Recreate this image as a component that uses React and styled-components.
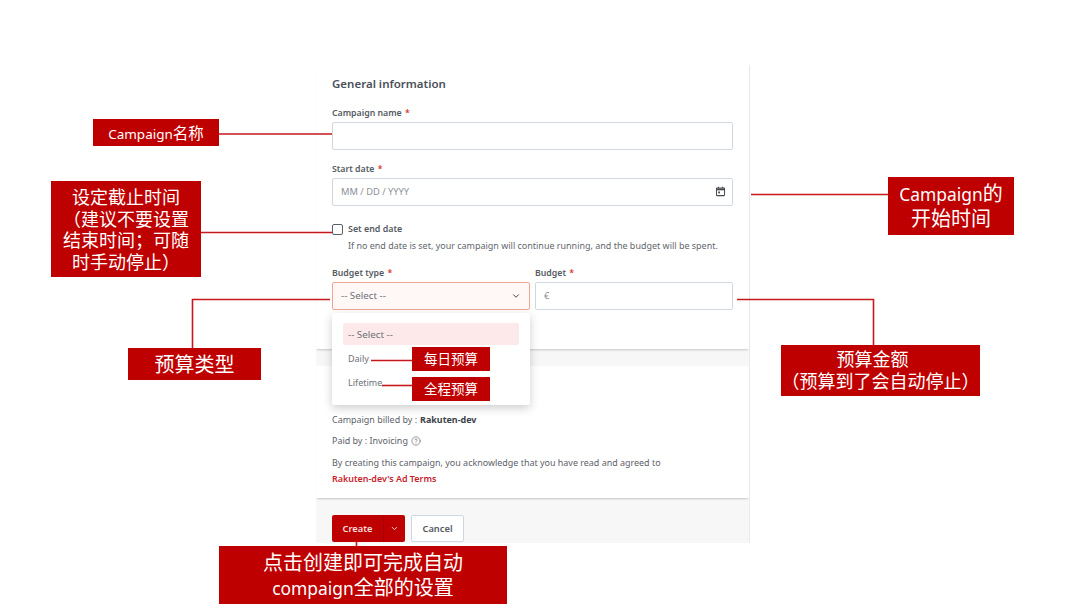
import React from "react";
import styled, { createGlobalStyle } from "styled-components";
import { ChevronDown, CircleHelp } from "lucide-react";

const Global = createGlobalStyle`
  html, body { margin: 0; padding: 0; background: #fff; }
  body { width: 1080px; height: 608px; overflow: hidden; font-family: "Noto Sans", "Liberation Sans", sans-serif; }
`;
const Page = styled.div`
  position: relative;
  width: 1080px;
  height: 608px;
  padding: 65px 0 0 316px;
  box-sizing: border-box;
  background: #fff;
`;
const Panel = styled.main`
  width: 433px;
  background: #f7f7f7;
  border-right: 1px solid #e9eaec;
  box-sizing: content-box;
`;
const Card = styled.section`
  position: relative;
  background: #fff;
  box-shadow: 0 2px 2px -1px rgba(0, 0, 0, 0.2);
  padding: ${(p) => p.$pad};
  height: ${(p) => p.$h}px;
  box-sizing: border-box;
  margin-bottom: ${(p) => p.$mb || 0}px;
`;
const Heading = styled.h2`
  margin: 0 0 14px;
  font-size: 11.5px;
  line-height: 16px;
  font-weight: 600;
  color: #4a5058;
`;
const Field = styled.div`
  display: flex;
  flex-direction: column;
  flex: ${(p) => p.$flex || "none"};
  margin-bottom: ${(p) => p.$mb || 0}px;
`;
const Label = styled.label`
  font-size: 8.75px;
  line-height: 13px;
  font-weight: 600;
  color: #555b63;
  margin: 1px 0 2px;
  i { font-style: normal; color: #d8392f; margin-left: 1px; }
`;
const Input = styled.div`
  height: 28px;
  box-sizing: border-box;
  border: 1px solid ${(p) => (p.$active ? "#f0a597" : "#cfd7e1")};
  background: ${(p) => (p.$active ? "#fff8f6" : "#fff")};
  border-radius: 2px;
  padding: 0 8px 1px;
  display: flex;
  align-items: center;
  justify-content: space-between;
  font-size: 9.3px;
  color: #8b9097;
  svg { color: #454a50; flex: none; }
`;
const SelectText = styled.span`
  font-size: 9.8px;
  color: #6d7278;
`;
const CheckRow = styled.div`
  display: flex;
  gap: 5px;
  margin-bottom: 14px;
`;
const CheckBox = styled.span`
  width: 11px;
  height: 11px;
  box-sizing: border-box;
  border: 1.2px solid #5c6167;
  border-radius: 2px;
  margin-top: 2px;
  flex: none;
  background: #fff;
`;
const CheckTitle = styled.div`
  font-size: 8.9px;
  line-height: 13px;
  font-weight: 600;
  color: #555b63;
  margin-bottom: 4px;
`;
const Helper = styled.div`
  font-size: 8.98px;
  line-height: 13px;
  color: #62676e;
  white-space: nowrap;
`;
const Row = styled.div`
  display: flex;
  gap: 5px;
`;
const Menu = styled.div`
  position: absolute;
  left: 16px;
  top: 248px;
  width: 198px;
  height: 92px;
  box-sizing: border-box;
  padding: 10px 11px;
  background: #fff;
  border-radius: 2px;
  box-shadow: 0 3px 10px rgba(0, 0, 0, 0.2);
  z-index: 2;
`;
const MenuItem = styled.div`
  height: ${(p) => (p.$on ? 22 : 24.5)}px;
  margin-top: ${(p) => (p.$first ? 1 : 0)}px;
  display: flex;
  align-items: center;
  padding: 0 5px;
  border-radius: 2px;
  background: ${(p) => (p.$on ? "#fde9e9" : "transparent")};
  font-size: ${(p) => (p.$on ? 9.8 : 9)}px;
  color: #6d7278;
`;
const Line = styled.p`
  margin: 0 0 ${(p) => p.$mb}px;
  font-size: 8.95px;
  line-height: 13px;
  color: #5d6269;
  display: flex;
  align-items: center;
  gap: 3px;
  white-space: nowrap;
  b { font-weight: 700; color: #3c4148; }
`;
const Terms = styled.a`
  display: block;
  font-size: 8.95px;
  line-height: 13px;
  font-weight: 600;
  color: #c8232c;
`;
const Footer = styled.footer`
  height: 45px;
  box-sizing: border-box;
  padding: 17px 16px 0;
  display: flex;
  gap: 6px;
  background: #f7f7f7;
`;
const SplitButton = styled.div`
  width: 73px;
  height: 27px;
  border-radius: 2px;
  background: #bf0000;
  display: flex;
  color: #f6dede;
  font-size: 9.3px;
  font-weight: 600;
`;
const SplitMain = styled.span`
  flex: 1;
  display: flex;
  align-items: center;
  justify-content: center;
  border-right: 1px solid #a50000;
`;
const SplitArrow = styled.span`
  width: 21px;
  display: flex;
  align-items: center;
  justify-content: center;
`;
const CancelButton = styled.div`
  width: 53px;
  height: 27px;
  box-sizing: border-box;
  border: 1px solid #cfd7e1;
  border-radius: 2px;
  background: #fff;
  display: flex;
  align-items: center;
  justify-content: center;
  font-size: 9.3px;
  font-weight: 600;
  color: #555b63;
`;
const Connectors = styled.svg`
  position: absolute;
  left: 0;
  top: 0;
  z-index: 3;
  pointer-events: none;
`;
const Callout = styled.div`
  position: absolute;
  left: ${(p) => p.$x}px;
  top: ${(p) => p.$y}px;
  width: ${(p) => p.$w}px;
  height: ${(p) => p.$h}px;
  box-sizing: border-box;
  padding-bottom: ${(p) => p.$lift || 0}px;
  z-index: 4;
  background: #bf0000;
  color: #fff;
  display: flex;
  flex-direction: column;
  align-items: center;
  justify-content: center;
  text-align: center;
  white-space: nowrap;
  font-family: "Noto Sans CJK SC", "Noto Sans", sans-serif;
  font-size: ${(p) => p.$fs}px;
  line-height: ${(p) => p.$lh}px;
`;
const Latin = styled.span`
  font-family: "Noto Sans", sans-serif;
  font-size: 0.87em;
`;
const ShiftedLine = styled.span`
  margin-right: 16px;
`;
const CalendarIcon = styled.svg`
  margin-right: -2px;
`;

const Calendar = () => (
  <CalendarIcon width="11" height="11" viewBox="0 0 12 12" fill="none" stroke="currentColor">
    <rect x="1.6" y="2.2" width="8.8" height="8.3" rx="0.6" strokeWidth="1.1" />
    <path d="M1.6 3.7h8.8" strokeWidth="2" />
    <path d="M3.7 .8v1.6M8.3 .8v1.6" strokeWidth="1.1" />
    <rect x="3.4" y="6" width="2" height="2" fill="currentColor" stroke="none" />
  </CalendarIcon>
);

const red = "#c6181d";

export default function App() {
  return (
    <Page>
      <Global />
      <Panel>
        <Card $pad="11px 16px 0" $h={284} $mb={17}>
          <Heading>General information</Heading>
          <Field $mb={12}>
            <Label>Campaign name <i>*</i></Label>
            <Input />
          </Field>
          <Field $mb={16}>
            <Label>Start date <i>*</i></Label>
            <Input>
              <span>MM / DD / YYYY</span>
              <Calendar />
            </Input>
          </Field>
          <CheckRow>
            <CheckBox />
            <div>
              <CheckTitle>Set end date</CheckTitle>
              <Helper>If no end date is set, your campaign will continue running, and the budget will be spent.</Helper>
            </div>
          </CheckRow>
          <Row>
            <Field $flex="1">
              <Label>Budget type <i>*</i></Label>
              <Input $active>
                <SelectText>-- Select --</SelectText>
                <ChevronDown size={10} strokeWidth={2.4} />
              </Input>
            </Field>
            <Field $flex="1">
              <Label>Budget <i>*</i></Label>
              <Input>€</Input>
            </Field>
          </Row>
          <Menu>
            <MenuItem $on>-- Select --</MenuItem>
            <MenuItem $first>Daily</MenuItem>
            <MenuItem>Lifetime</MenuItem>
          </Menu>
        </Card>
        <Card $pad="47px 16px 0" $h={132}>
          <Line $mb={8}>Campaign billed by : <b>Rakuten-dev</b></Line>
          <Line $mb={9}>Paid by : Invoicing <CircleHelp size={10} strokeWidth={1.5} /></Line>
          <Line $mb={3}>By creating this campaign, you acknowledge that you have read and agreed to</Line>
          <Terms>Rakuten-dev's Ad Terms</Terms>
        </Card>
        <Footer>
          <SplitButton>
            <SplitMain>Create</SplitMain>
            <SplitArrow><ChevronDown size={9} strokeWidth={2.6} /></SplitArrow>
          </SplitButton>
          <CancelButton>Cancel</CancelButton>
        </Footer>
      </Panel>

      <Connectors width="1080" height="608" fill="none" stroke={red} strokeWidth="1.6">
        <path d="M219 134H332" />
        <path d="M201 232.5H332" />
        <path d="M751 194.5H888" />
        <path d="M330 299.5H192.5V348" />
        <path d="M737 299.5H873.5V345" />
        <path d="M371 360.5H412" />
        <path d="M382 385.5H412" />
        <path d="M356.5 542V546" />
      </Connectors>

      <Callout $x={93} $y={119} $w={126} $h={27} $fs={15.5} $lh={20}>
        <span><Latin>Campaign</Latin>名称</span>
      </Callout>
      <Callout $x={51} $y={181} $w={150} $h={96} $fs={18} $lh={21.5}>
        <span>设定截止时间</span>
        <span>（建议不要设置</span>
        <span>结束时间；可随</span>
        <span>时手动停止）</span>
      </Callout>
      <Callout $x={128} $y={348} $w={133} $h={32} $fs={20} $lh={26}>预算类型</Callout>
      <Callout $x={888} $y={177} $w={126} $h={58} $fs={20} $lh={24} $lift={1}>
        <span><Latin>Campaign</Latin>的</span>
        <span>开始时间</span>
      </Callout>
      <Callout $x={781} $y={345} $w={199} $h={51} $fs={18} $lh={22} $lift={3}>
        <ShiftedLine>预算金额</ShiftedLine>
        <span>（预算到了会自动停止）</span>
      </Callout>
      <Callout $x={412} $y={347} $w={78} $h={24} $fs={13.5} $lh={18} $lift={2}>每日预算</Callout>
      <Callout $x={412} $y={377} $w={78} $h={24} $fs={13.5} $lh={18} $lift={2}>全程预算</Callout>
      <Callout $x={219} $y={546} $w={288} $h={58} $fs={20} $lh={25}>
        <span>点击创建即可完成自动</span>
        <span><Latin>compaign</Latin>全部的设置</span>
      </Callout>
    </Page>
  );
}
